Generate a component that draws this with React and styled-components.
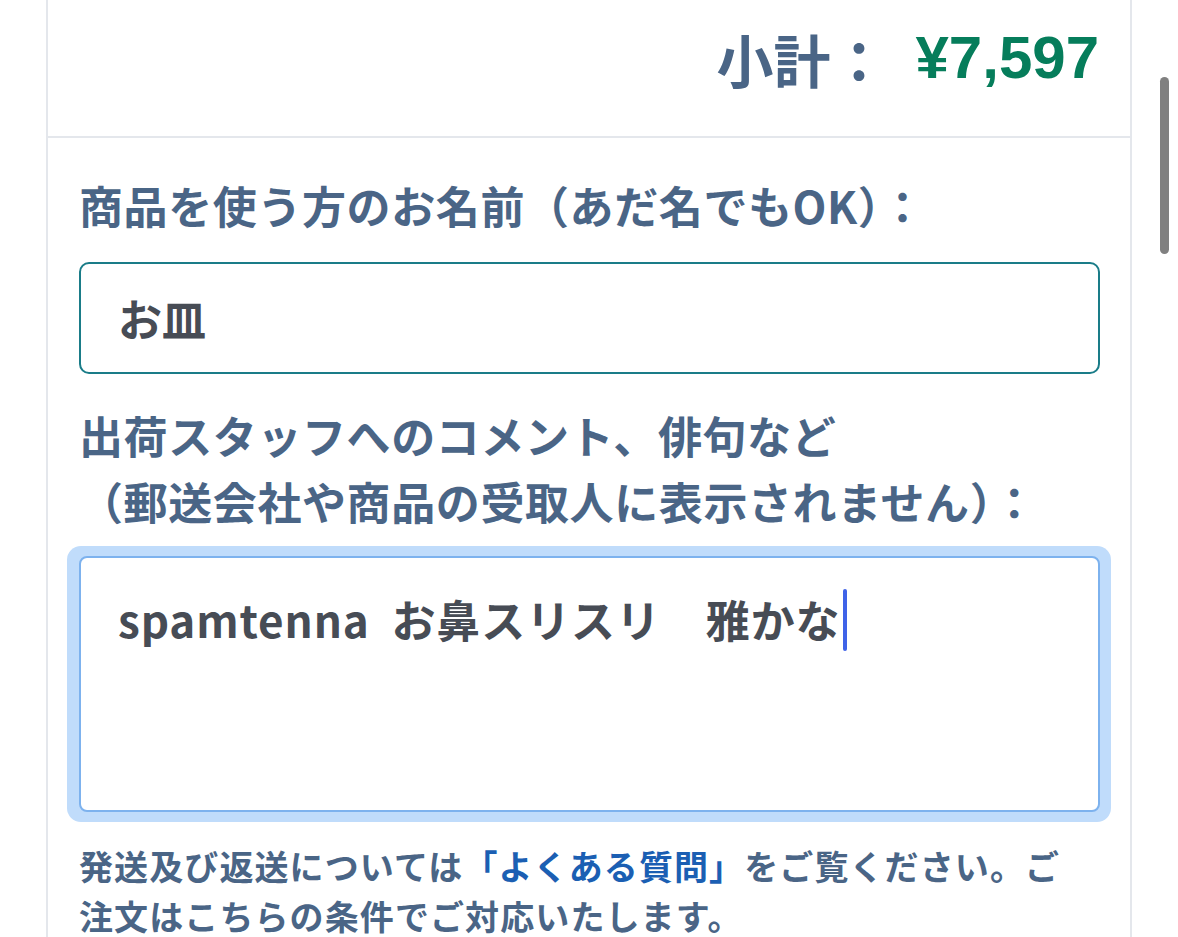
import React from 'react'
import styled, { createGlobalStyle } from 'styled-components'

const GlobalStyle = createGlobalStyle`
  html, body {
    margin: 0;
    padding: 0;
    background: #ffffff;
  }
  body {
    font-family: "Noto Sans CJK JP", "Noto Sans", sans-serif;
    overflow: hidden;
  }
`

const Page = styled.div`
  width: 1178px;
  height: 937px;
  padding-left: 46px;
  box-sizing: border-box;
  position: relative;
`

const Card = styled.section`
  width: 1086px;
  min-height: 937px;
  box-sizing: border-box;
  border-left: 2px solid #e4e7ec;
  border-right: 2px solid #e4e7ec;
`

const Header = styled.div`
  height: 138px;
  box-sizing: border-box;
  display: flex;
  justify-content: flex-end;
  align-items: center;
  padding: 0 31px 20px 0;
  border-bottom: 2px solid #e4e7ec;
  font-weight: 700;
  line-height: 1;
`

const SubLabel = styled.span`
  color: #4a6586;
  font-size: 57px;
  margin-right: 28px;
`

const Price = styled.span`
  color: #067d5b;
  font-family: "Liberation Sans", "Noto Sans CJK JP", sans-serif;
  font-size: 60px;
`

const Form = styled.form`
  padding: 34px 30px 0 31px;
`

const Label = styled.label`
  display: block;
  color: #4a6586;
  font-weight: 700;
  font-size: 44px;
  line-height: 66px;
  letter-spacing: 0.6px;
  margin-bottom: ${p => p.$gap || 12}px;
`

const Input = styled.div`
  height: 112px;
  box-sizing: border-box;
  border: 2px solid #1a7c88;
  border-radius: 10px;
  display: flex;
  align-items: center;
  padding: 0 37px;
  color: #474c55;
  font-weight: 700;
  font-size: 44px;
  margin-bottom: 28px;
`

const Ring = styled.div`
  margin: 0 -11px 0 -12px;
  padding: 10px 11px 10px 12px;
  border-radius: 14px;
  background: #c0dcfb;
`

const TextArea = styled.div`
  height: 256px;
  box-sizing: border-box;
  border: 2px solid #7db2ee;
  border-radius: 8px;
  background: #fff;
  padding: 29px 37px;
  color: #474c55;
  font-weight: 700;
  font-size: 44px;
  line-height: 64px;
  letter-spacing: 0.9px;
  white-space: pre;
`

const Caret = styled.span`
  display: inline-block;
  width: 4px;
  height: 62px;
  margin-left: 3px;
  border-radius: 2px;
  background: #3f63e8;
  vertical-align: middle;
  margin-top: -12px;
`

const Note = styled.p`
  margin: 19px 0 0;
  max-width: 1000px;
  color: #4a6586;
  font-weight: 700;
  font-size: 34px;
  line-height: 50px;
  letter-spacing: 1.1px;
`

const Link = styled.a`
  color: #1b5fb3;
  text-decoration: none;
`

const Scrollbar = styled.div`
  position: absolute;
  top: 77px;
  left: 1160px;
  width: 9px;
  height: 177px;
  border-radius: 5px;
  background: #808080;
`

export default function App() {
  return (
    <>
      <GlobalStyle />
      <Page>
        <Card>
          <Header>
            <SubLabel>小計：</SubLabel>
            <Price>¥7,597</Price>
          </Header>
          <Form>
            <Label $gap={24}>商品を使う方のお名前（あだ名でもOK）：</Label>
            <Input>お皿</Input>
            <Label $gap={12}>
              出荷スタッフへのコメント、俳句など
              <br />
              （郵送会社や商品の受取人に表示されません）：
            </Label>
            <Ring>
              <TextArea role="textbox">
                spamtenna  お鼻スリスリ　雅かな<Caret />
              </TextArea>
            </Ring>
            <Note>
              発送及び返送については<Link href="#">「よくある質問」</Link>をご覧ください。ご注文はこちらの条件でご対応いたします。
            </Note>
          </Form>
        </Card>
        <Scrollbar />
      </Page>
    </>
  )
}
